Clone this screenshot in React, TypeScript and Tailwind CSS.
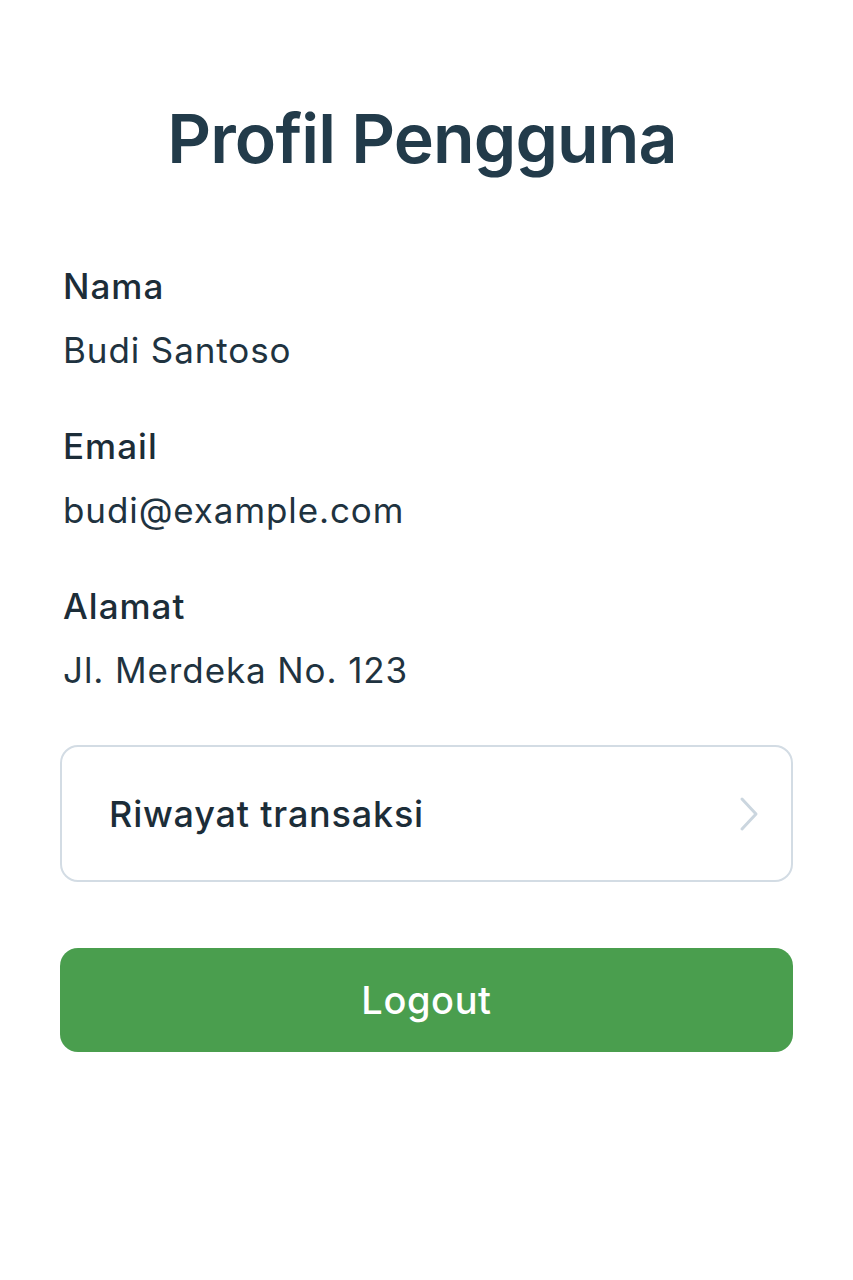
const FIELDS = [
  { label: "Nama", value: "Budi Santoso" },
  { label: "Email", value: "budi@example.com" },
  { label: "Alamat", value: "Jl. Merdeka No. 123" },
];

function ChevronRight() {
  return (
    <svg width="22" height="36" viewBox="0 0 22 36" fill="none" aria-hidden>
      <path
        d="M4 3l14 15L4 33"
        stroke="#cbd6df"
        strokeWidth="3"
        strokeLinecap="round"
        strokeLinejoin="round"
      />
    </svg>
  );
}

export default function App() {
  return (
    <div className="min-h-[1280px] bg-white px-[60px] font-['Inter',sans-serif]">
      <h1 className="pt-[102px] pr-[9px] text-center text-[68px] font-semibold leading-[72px] tracking-[-0.9px] text-[#223b4a]">
        Profil Pengguna
      </h1>

      <div className="mt-[92px] flex flex-col gap-[56px] pl-[3px]">
        {FIELDS.map((field) => (
          <div key={field.label} className="flex flex-col gap-[24px]">
            <div className="text-[35px] font-medium leading-[40px] tracking-[1px] text-[#1c2d38]">
              {field.label}
            </div>
            <div className="text-[35px] leading-[40px] tracking-[0.9px] text-[#1f3340]">
              {field.value}
            </div>
          </div>
        ))}
      </div>

      <button className="mt-[55px] flex h-[137px] w-full items-center justify-between rounded-[18px] border-2 border-[#d3dce4] bg-white pl-[47px] pr-[31px]">
        <span className="text-[36px] font-medium tracking-[0.8px] text-[#1c2d38]">
          Riwayat transaksi
        </span>
        <ChevronRight />
      </button>

      <button className="mt-[66px] flex h-[104px] w-full items-center justify-center rounded-[18px] bg-[#4a9e4e] text-[38px] font-medium tracking-[0.6px] text-white">
        Logout
      </button>
    </div>
  );
}
